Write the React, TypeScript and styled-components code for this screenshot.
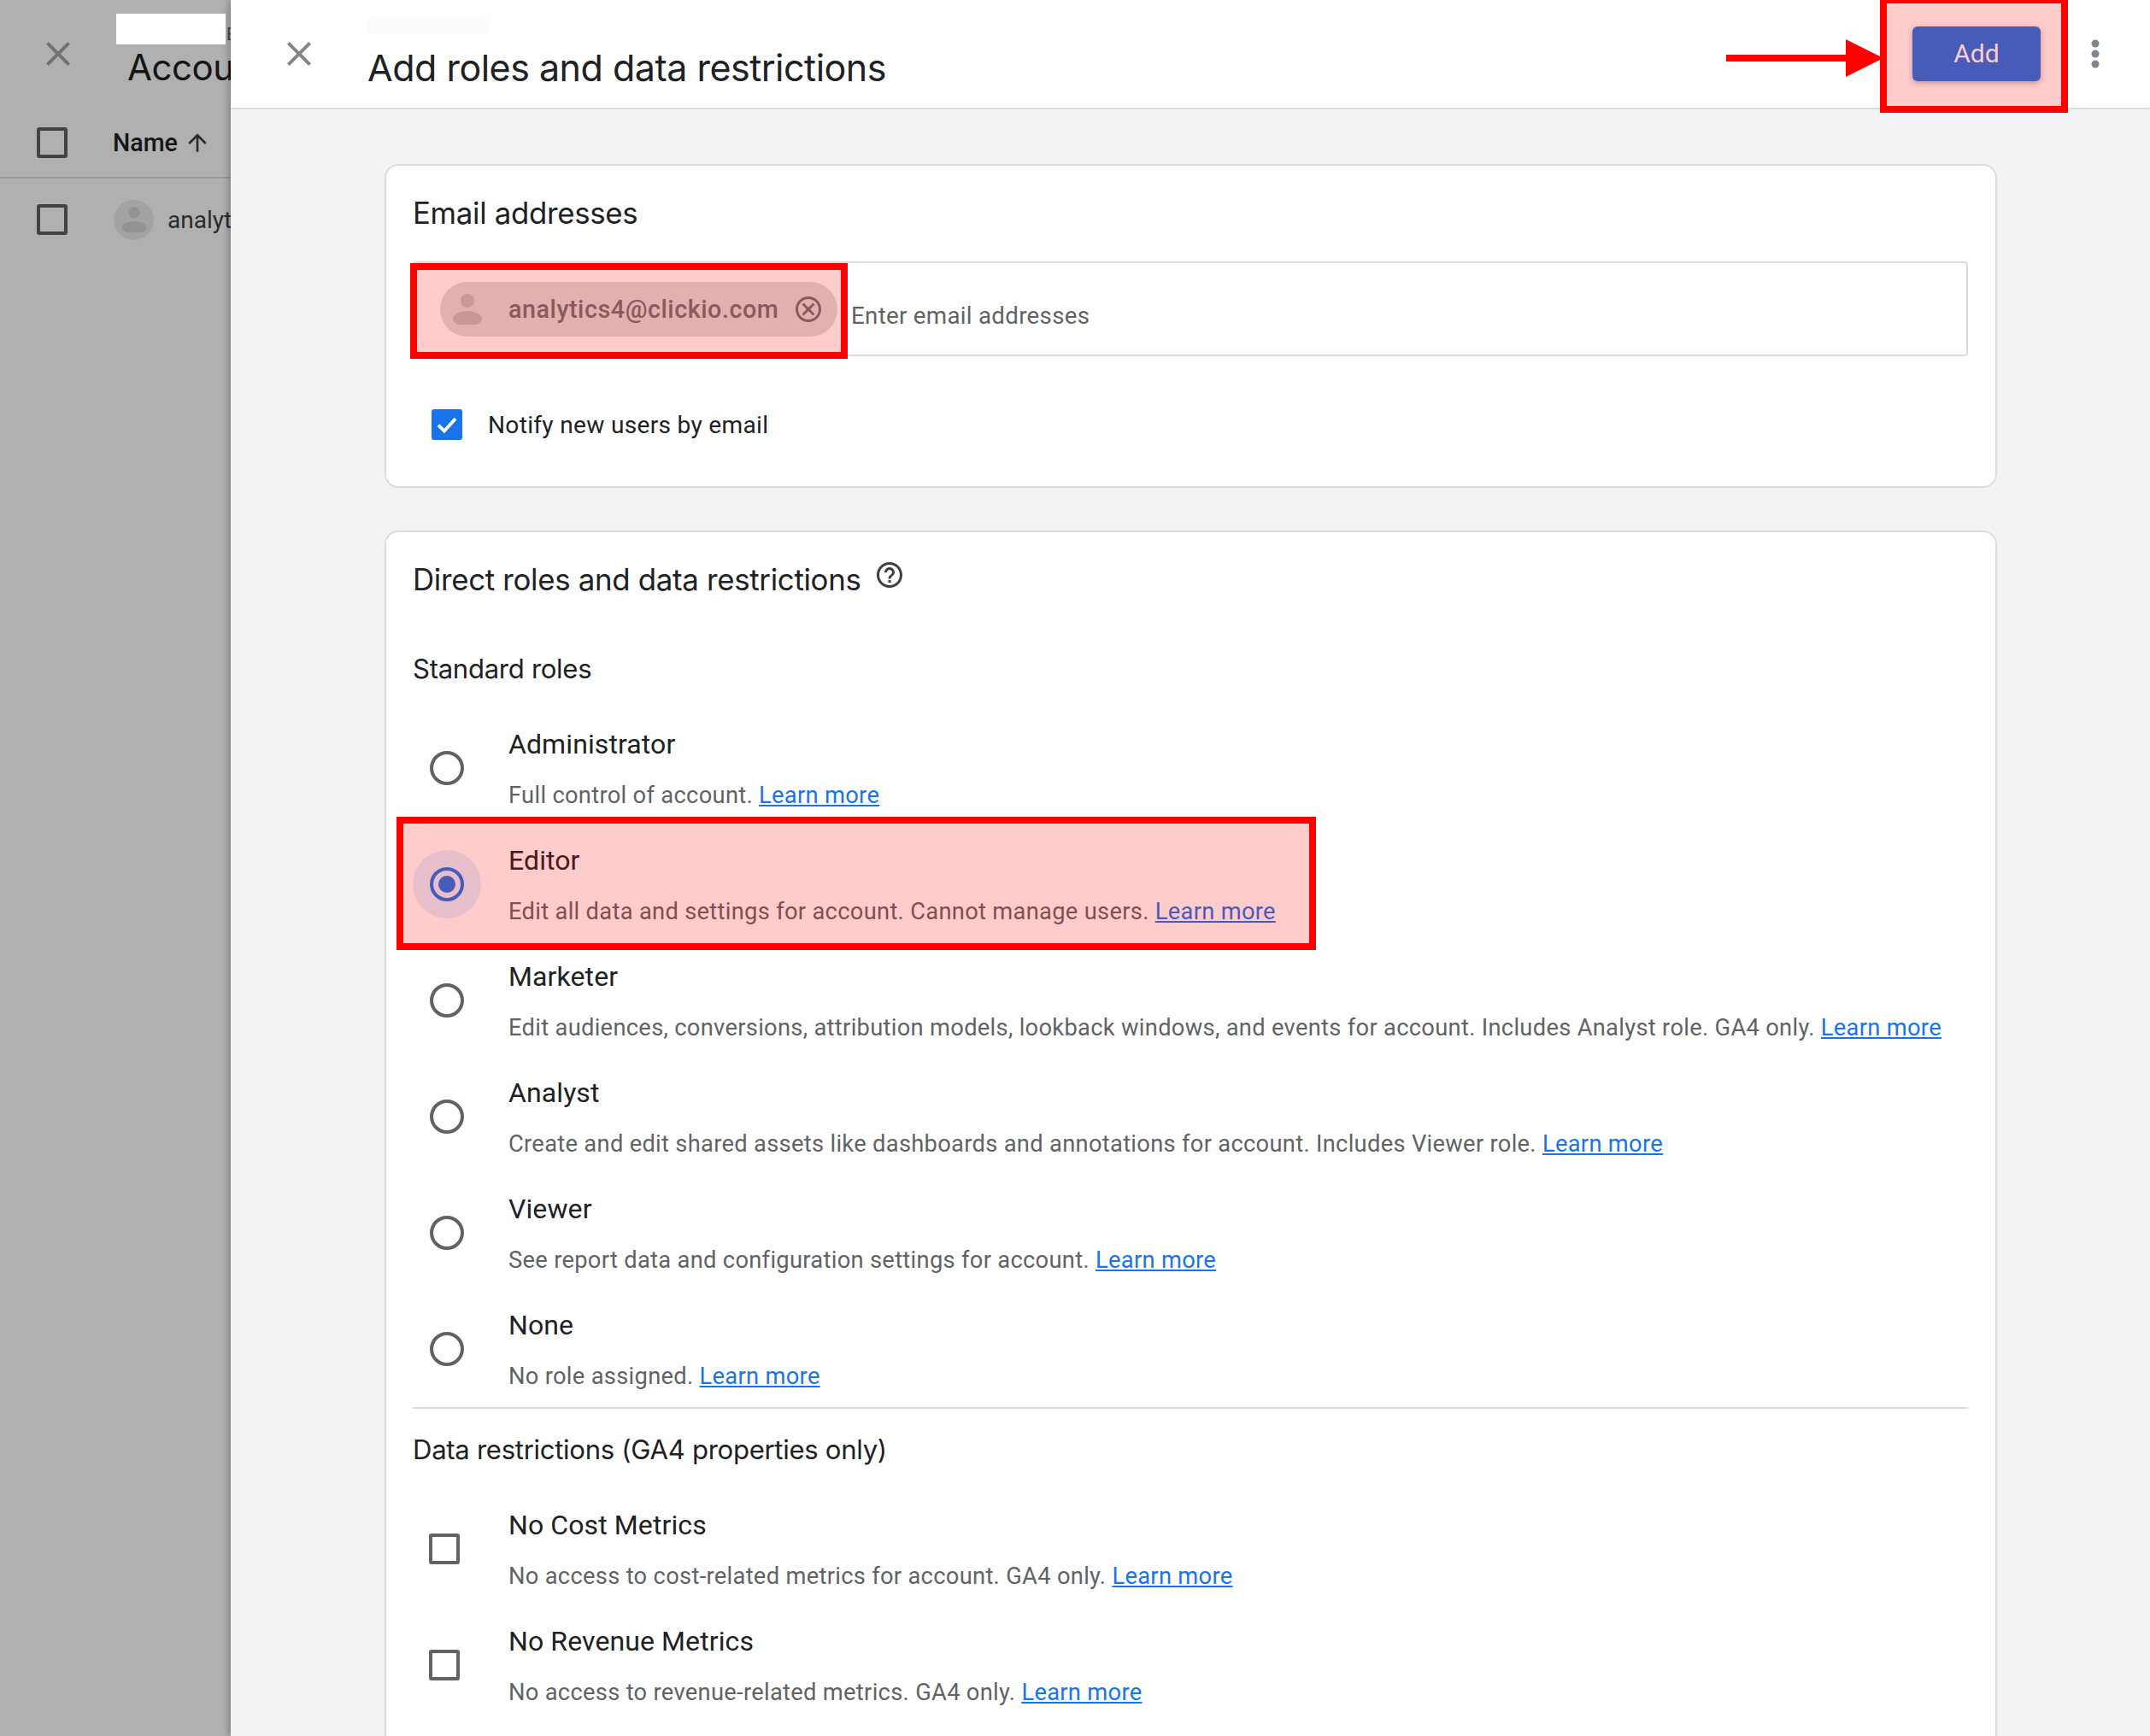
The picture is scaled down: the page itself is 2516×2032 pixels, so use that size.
/**
 * App.tsx
 *
 * Add roles and data restrictions panel, sitting over the account users list
 */

import * as React from "react"
import styled, { createGlobalStyle } from "styled-components"

const HEADING_FONT = `Inter, "Liberation Sans", sans-serif`
const BODY_FONT = `Roboto, "Liberation Sans", sans-serif`

const CLOSE_PATH =
    "M19 6.41L17.59 5 12 10.59 6.41 5 5 6.41 10.59 12 5 17.59 6.41 19 12 13.41 17.59 19 19 17.59 13.41 12z"
const HELP_PATH =
    "M11 18h2v-2h-2v2zm1-16C6.48 2 2 6.48 2 12s4.48 10 10 10 10-4.48 10-10S17.52 2 12 2zm0 18c-4.41 0-8-3.59-8-8s3.59-8 8-8 8 3.59 8 8-3.59 8-8 8zm0-14c-2.21 0-4 1.79-4 4h2c0-1.1.9-2 2-2s2 .9 2 2c0 2-3 1.75-3 5h2c0-2.25 3-2.5 3-5 0-2.21-1.79-4-4-4z"
const ARROW_UP_PATH = "M4 12l1.41 1.41L11 7.83V20h2V7.83l5.58 5.59L20 12l-8-8-8 8z"
const CANCEL_PATH =
    "M12 2C6.47 2 2 6.47 2 12s4.47 10 10 10 10-4.47 10-10S17.53 2 12 2zm0 18c-4.41 0-8-3.59-8-8s3.59-8 8-8 8 3.59 8 8-3.59 8-8 8zm3.59-13L12 10.59 8.41 7 7 8.41 10.59 12 7 15.59 8.41 17 12 13.41 15.59 17 17 15.59 13.41 12 17 8.41z"

const GlobalStyle = createGlobalStyle`
    html, body {
        margin: 0;
        padding: 0;
        background: #fff;
    }
    * {
        box-sizing: border-box;
    }
`

const Page = styled.div`
    position: relative;
    display: flex;
    width: 2516px;
    height: 2032px;
    overflow: hidden;
    font-family: ${BODY_FONT};
    color: #202124;
`

/* users list behind the panel */
const ListPane = styled.div`
    position: relative;
    flex: 0 0 270px;
    background: #fff;
    overflow: hidden;
`

const Scrim = styled.div`
    position: absolute;
    inset: 0;
    background: rgba(0, 0, 0, 0.31);
`

const Redaction = styled.div`
    position: absolute;
    left: 136px;
    top: 16px;
    width: 128px;
    height: 36px;
    background: #fff;
    z-index: 1;
`

const ListHeader = styled.div`
    display: flex;
    align-items: flex-start;
    height: 127px;
    padding: 39px 0 0 44px;
    white-space: nowrap;
`

const ListCloseIcon = styled.svg`
    flex: 0 0 48px;
    width: 48px;
    height: 48px;
    fill: #a0a6ab;
`

const ListTitleBlock = styled.div`
    margin-left: 57px;
`

const Breadcrumb = styled.div`
    height: 20px;
    margin-top: -9px;
    padding-left: 116px;
    font-size: 20px;
    line-height: 20px;
    color: #5f6368;
`

const ListTitle = styled.div`
    margin-top: 5px;
    font-family: ${HEADING_FONT};
    font-size: 42px;
    line-height: 48px;
    letter-spacing: -0.5px;
    color: #202124;
`

const ListRow = styled.div<{ $height: number; $ruled?: boolean }>`
    display: flex;
    align-items: center;
    height: ${p => p.$height}px;
    padding-left: 43px;
    white-space: nowrap;
    border-bottom: ${p => (p.$ruled ? "2px solid #dadce0" : "none")};
`

const ColumnName = styled.span`
    margin-left: 53px;
    font-size: 28.6px;
    font-weight: 500;
`

const SortArrow = styled.svg`
    flex: 0 0 32px;
    width: 32px;
    height: 32px;
    margin-left: 7px;
    fill: #3c4043;
`

const Avatar = styled.div`
    flex: 0 0 auto;
    display: flex;
    align-items: center;
    justify-content: center;
    width: 47px;
    height: 47px;
    margin-left: 54px;
    border-radius: 50%;
    background: #ececec;
`

const UserName = styled.span`
    margin-left: 16px;
    font-size: 28px;
    color: #3c4043;
`

/* main panel */
const Panel = styled.div`
    position: relative;
    flex: 1 1 auto;
    display: flex;
    flex-direction: column;
    min-width: 0;
    background: #f1f3f4;
    box-shadow: -2px 0 8px rgba(0, 0, 0, 0.3);
`

const PanelHeader = styled.div`
    flex: 0 0 128px;
    display: flex;
    align-items: flex-start;
    padding: 0 40px 0 56px;
    background: #fff;
    border-bottom: 2px solid #dadce0;
`

const IconSlot = styled.div`
    flex: 0 0 48px;
    width: 48px;
    height: 48px;
    margin-top: 39px;
`

const TitleBlock = styled.div`
    margin-left: 56px;
    padding-top: 20px;
`

const FaintBar = styled.div`
    width: 142px;
    height: 20px;
    background: #fcfcfc;
`

const Title = styled.div`
    margin-top: 15px;
    font-family: ${HEADING_FONT};
    font-size: 43px;
    line-height: 48px;
    letter-spacing: -0.5px;
    color: #202124;
`

const AddButton = styled.button`
    width: 150px;
    height: 64px;
    margin: 31px 40px 0 auto;
    padding: 0 0 2px;
    border: 0;
    border-radius: 6px;
    background: #1a73e8;
    box-shadow: 0 2px 6px rgba(60, 64, 67, 0.4);
    color: #fff;
    font-family: ${BODY_FONT};
    font-size: 30px;
    font-weight: 400;
`

const PanelBody = styled.div`
    flex: 1 1 auto;
    padding: 64px 179px 0 180px;
    min-height: 0;
`

const Card = styled.section<{ $spaced?: boolean }>`
    margin-top: ${p => (p.$spaced ? "50px" : "0")};
    padding: 35px 32px 54px 31px;
    background: #fff;
    border: 2px solid #dadce0;
    border-radius: 16px;
`

const CardTitle = styled.div`
    display: flex;
    align-items: center;
    font-family: ${HEADING_FONT};
    font-size: 34.8px;
    line-height: 40px;
    letter-spacing: -0.3px;
    color: #202124;
`

const HelpIcon = styled.svg`
    width: 36px;
    height: 36px;
    margin: -10px 0 0 16px;
    fill: #3c4043;
`

const EmailField = styled.div`
    display: flex;
    align-items: flex-start;
    height: 111px;
    margin-top: 37px;
    padding-left: 30px;
    border: 2px solid #dadce0;
    border-radius: 4px;
`

const Chip = styled.div`
    flex: 0 0 465px;
    display: flex;
    align-items: center;
    height: 64px;
    margin-top: 22px;
    padding-left: 14px;
    border-radius: 32px;
    background: #dcdcdc;
`

const ChipText = styled.span`
    margin-left: 30px;
    font-size: 28.7px;
    font-weight: 500;
    letter-spacing: 0.55px;
    color: #6c7076;
    white-space: nowrap;
`

const ChipClose = styled.svg`
    width: 36px;
    height: 36px;
    margin-left: 17px;
    fill: #6c7076;
`

const Placeholder = styled.span`
    margin: 42px 0 0 16px;
    font-size: 27.7px;
    line-height: 40px;
    letter-spacing: 0.3px;
    color: #5f6368;
`

const NotifyRow = styled.div`
    display: flex;
    align-items: center;
    height: 36px;
    margin-top: 62px;
    padding-left: 22px;
`

const CheckedBox = styled.div`
    flex: 0 0 36px;
    display: flex;
    align-items: center;
    justify-content: center;
    width: 36px;
    height: 36px;
    border-radius: 3px;
    background: #1a73e8;
`

const NotifyLabel = styled.span`
    margin-left: 30px;
    font-size: 28.1px;
    letter-spacing: 0.3px;
    color: #202124;
`

const SectionLabel = styled.div<{ $top: number; $bottom: number }>`
    margin: ${p => p.$top}px 0 ${p => p.$bottom}px;
    font-family: ${HEADING_FONT};
    font-size: 31.1px;
    line-height: 40px;
    letter-spacing: -0.3px;
    color: #202124;
`

const OptionRow = styled.div`
    display: flex;
    align-items: center;
    height: 136px;
`

const ControlCell = styled.div`
    flex: 0 0 80px;
    display: flex;
    align-items: center;
    justify-content: center;
    height: 80px;
    margin-right: 32px;
`

const Halo = styled.div<{ $active: boolean }>`
    display: flex;
    align-items: center;
    justify-content: center;
    width: 80px;
    height: 80px;
    border-radius: 50%;
    background: ${p => (p.$active ? "#e2effd" : "transparent")};
`

const RadioRing = styled.div<{ $checked: boolean }>`
    display: flex;
    align-items: center;
    justify-content: center;
    width: 40px;
    height: 40px;
    border-radius: 50%;
    border: 4px solid ${p => (p.$checked ? "#1a73e8" : "#5f6368")};
`

const RadioDot = styled.div`
    width: 20px;
    height: 20px;
    border-radius: 50%;
    background: #1a73e8;
`

const SquareBox = styled.div<{ $offset?: number }>`
    flex: 0 0 36px;
    width: 36px;
    height: 36px;
    margin-left: ${p => p.$offset || 0}px;
    border: 4px solid #5f6368;
    border-radius: 3px;
`

const OptionText = styled.div`
    flex: 1 1 auto;
    align-self: flex-start;
    padding-top: 20px;
    white-space: nowrap;
`

const OptionTitle = styled.div`
    font-size: 32px;
    line-height: 40px;
    letter-spacing: 0.1px;
    color: #202124;
`

const OptionDescription = styled.div`
    margin-top: 20px;
    font-size: 27.3px;
    line-height: 40px;
    letter-spacing: 0.3px;
    color: #5f6368;
`

const LearnMore = styled.a`
    color: #1a73e8;
    text-decoration: underline;
`

const Divider = styled.hr`
    height: 2px;
    margin: 0;
    border: 0;
    background: #dadce0;
`

/* annotation layer drawn on top of the screenshot */
const Callout = styled.div<{ $x: number; $y: number; $w: number; $h: number }>`
    position: absolute;
    left: ${p => p.$x}px;
    top: ${p => p.$y}px;
    width: ${p => p.$w}px;
    height: ${p => p.$h}px;
    background: rgba(255, 0, 0, 0.2);
    border: 8px solid #f00;
    pointer-events: none;
    z-index: 5;
`

const CalloutArrow = styled.svg`
    position: absolute;
    left: 2020px;
    top: 46px;
    width: 184px;
    height: 44px;
    z-index: 6;
`

const CloseIcon: React.FC = () => (
    <svg width="48" height="48" viewBox="0 0 24 24" fill="#80868b">
        <path d={CLOSE_PATH} />
    </svg>
)

const MoreIcon: React.FC = () => (
    <svg width="48" height="48" viewBox="0 0 48 48" fill="#80868b">
        <circle cx="24" cy="12" r="4.5" />
        <circle cx="24" cy="24" r="4.5" />
        <circle cx="24" cy="36" r="4.5" />
    </svg>
)

const PersonIcon: React.FC<{ size: number; fill: string }> = ({ size, fill }) => (
    <svg width={size} height={size} viewBox="0 0 36 36" fill={fill}>
        <circle cx="18" cy="8" r="8" />
        <ellipse cx="18" cy="29" rx="17" ry="9" />
    </svg>
)

interface IRole {
    title: string
    description: string
}

const ROLES: IRole[] = [
    { title: "Administrator", description: "Full control of account." },
    { title: "Editor", description: "Edit all data and settings for account. Cannot manage users." },
    {
        title: "Marketer",
        description:
            "Edit audiences, conversions, attribution models, lookback windows, and events for account. Includes Analyst role. GA4 only.",
    },
    {
        title: "Analyst",
        description:
            "Create and edit shared assets like dashboards and annotations for account. Includes Viewer role.",
    },
    { title: "Viewer", description: "See report data and configuration settings for account." },
    { title: "None", description: "No role assigned." },
]

const RESTRICTIONS: IRole[] = [
    { title: "No Cost Metrics", description: "No access to cost-related metrics for account. GA4 only." },
    { title: "No Revenue Metrics", description: "No access to revenue-related metrics. GA4 only." },
]

const OptionBody: React.FC<IRole> = ({ title, description }) => (
    <OptionText>
        <OptionTitle>{title}</OptionTitle>
        <OptionDescription>
            {description} <LearnMore>Learn more</LearnMore>
        </OptionDescription>
    </OptionText>
)

export default function App(): JSX.Element {
    return (
        <Page>
            <GlobalStyle />
            <ListPane>
                <ListHeader>
                    <ListCloseIcon viewBox="0 0 24 24">
                        <path d={CLOSE_PATH} />
                    </ListCloseIcon>
                    <ListTitleBlock>
                        <Breadcrumb>E</Breadcrumb>
                        <ListTitle>Account</ListTitle>
                    </ListTitleBlock>
                </ListHeader>
                <ListRow $height={82} $ruled>
                    <SquareBox />
                    <ColumnName>Name</ColumnName>
                    <SortArrow viewBox="0 0 24 24">
                        <path d={ARROW_UP_PATH} />
                    </SortArrow>
                </ListRow>
                <ListRow $height={96}>
                    <SquareBox />
                    <Avatar>
                        <PersonIcon size={30} fill="#d6d6d6" />
                    </Avatar>
                    <UserName>analytics4@clickio.com</UserName>
                </ListRow>
                <Scrim />
                <Redaction />
            </ListPane>

            <Panel>
                <PanelHeader>
                    <IconSlot>
                        <CloseIcon />
                    </IconSlot>
                    <TitleBlock>
                        <FaintBar />
                        <Title>Add roles and data restrictions</Title>
                    </TitleBlock>
                    <AddButton>Add</AddButton>
                    <IconSlot>
                        <MoreIcon />
                    </IconSlot>
                </PanelHeader>

                <PanelBody>
                    <Card>
                        <CardTitle>Email addresses</CardTitle>
                        <EmailField>
                            <Chip>
                                <PersonIcon size={36} fill="#bdbdbd" />
                                <ChipText>analytics4@clickio.com</ChipText>
                                <ChipClose viewBox="0 0 24 24">
                                    <path d={CANCEL_PATH} />
                                </ChipClose>
                            </Chip>
                            <Placeholder>Enter email addresses</Placeholder>
                        </EmailField>
                        <NotifyRow>
                            <CheckedBox>
                                <svg width="30" height="30" viewBox="0 0 24 24" fill="none" stroke="#fff" strokeWidth="3">
                                    <path d="M4 12.5l5.5 5.5L20 6.5" />
                                </svg>
                            </CheckedBox>
                            <NotifyLabel>Notify new users by email</NotifyLabel>
                        </NotifyRow>
                    </Card>

                    <Card $spaced>
                        <CardTitle>
                            Direct roles and data restrictions
                            <HelpIcon viewBox="0 0 24 24">
                                <path d={HELP_PATH} />
                            </HelpIcon>
                        </CardTitle>
                        <SectionLabel $top={65} $bottom={28}>
                            Standard roles
                        </SectionLabel>
                        {ROLES.map(role => (
                            <OptionRow key={role.title}>
                                <ControlCell>
                                    <Halo $active={role.title === "Editor"}>
                                        <RadioRing $checked={role.title === "Editor"}>
                                            {role.title === "Editor" ? <RadioDot /> : null}
                                        </RadioRing>
                                    </Halo>
                                </ControlCell>
                                <OptionBody {...role} />
                            </OptionRow>
                        ))}
                        <Divider />
                        <SectionLabel $top={28} $bottom={28}>
                            Data restrictions (GA4 properties only)
                        </SectionLabel>
                        {RESTRICTIONS.map(item => (
                            <OptionRow key={item.title}>
                                <ControlCell>
                                    <SquareBox $offset={-7} />
                                </ControlCell>
                                <OptionBody {...item} />
                            </OptionRow>
                        ))}
                    </Card>
                </PanelBody>
            </Panel>

            <CalloutArrow viewBox="0 0 184 44">
                <path fill="#f00" d="M0 18h140V0l44 22-44 22V26H0z" />
            </CalloutArrow>
            <Callout $x={2200} $y={-4} $w={220} $h={136} />
            <Callout $x={480} $y={308} $w={512} $h={112} />
            <Callout $x={464} $y={956} $w={1076} $h={156} />
        </Page>
    )
}
